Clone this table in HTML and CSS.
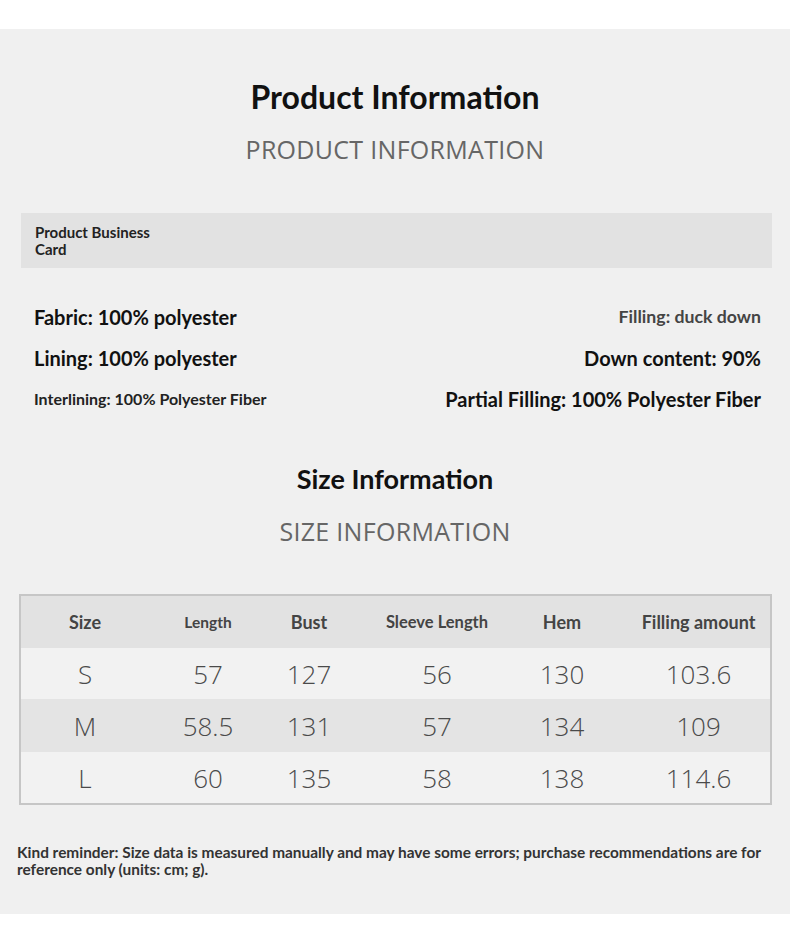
FILE: index.html
```html
<!DOCTYPE html>
<html>
<head>
<meta charset="utf-8">
<link rel="stylesheet" href="styles.css">
</head>
<body>
<div class="page">
  <section class="title-block first">
    <h1 class="title">Product Information</h1>
    <div class="subtitle">PRODUCT INFORMATION</div>
  </section>

  <div class="card-bar"><span class="card-label">Product Business<br>Card</span></div>

  <div class="specs">
    <div class="spec-col left">
      <div class="spec big">Fabric: 100% polyester</div>
      <div class="spec big">Lining: 100% polyester</div>
      <div class="spec small">Interlining: 100% Polyester Fiber</div>
    </div>
    <div class="spec-col right">
      <div class="spec mid">Filling: duck down</div>
      <div class="spec big">Down content: 90%</div>
      <div class="spec big">Partial Filling: 100% Polyester Fiber</div>
    </div>
  </div>

  <section class="title-block second">
    <h2 class="title">Size Information</h2>
    <div class="subtitle">SIZE INFORMATION</div>
  </section>

  <div class="table">
    <div class="row head">
      <div class="cell h-lg">Size</div>
      <div class="cell h-sm">Length</div>
      <div class="cell h-lg">Bust</div>
      <div class="cell h-md">Sleeve Length</div>
      <div class="cell h-lg">Hem</div>
      <div class="cell h-lg last">Filling amount</div>
    </div>
    <div class="row light">
      <div class="cell">S</div><div class="cell">57</div><div class="cell">127</div><div class="cell">56</div><div class="cell">130</div><div class="cell last">103.6</div>
    </div>
    <div class="row dark">
      <div class="cell">M</div><div class="cell">58.5</div><div class="cell">131</div><div class="cell">57</div><div class="cell">134</div><div class="cell last">109</div>
    </div>
    <div class="row light">
      <div class="cell">L</div><div class="cell">60</div><div class="cell">135</div><div class="cell">58</div><div class="cell">138</div><div class="cell last">114.6</div>
    </div>
  </div>

  <p class="note">Kind reminder: Size data is measured manually and may have some errors; purchase recommendations are for reference only (units: cm; g).</p>
</div>
</body>
</html>
```

FILE: styles.css
```css
html, body {
  margin: 0;
  padding: 0;
  background: #ffffff;
}
body {
  font-family: "Lato", "Open Sans", sans-serif;
}
.page {
  margin-top: 29px;
  background: #f0f0f0;
  height: 885px;
  box-sizing: border-box;
  padding-top: 1px;
}
.title-block {
  display: flex;
  flex-direction: column;
  align-items: center;
}
.title-block.first {
  margin-top: 47px;
}
.title-block.second {
  margin-top: 40px;
}
.title {
  margin: 0;
  font-family: "Lato", sans-serif;
  font-weight: 700;
  font-size: 32px;
  line-height: 40px;
  color: #111;
}
.second .title {
  font-size: 27px;
}
.subtitle {
  margin-top: 17px;
  font-family: "Open Sans", sans-serif;
  font-weight: 400;
  font-size: 25px;
  line-height: 30px;
  color: #666;
  letter-spacing: 0.3px;
}
.card-bar {
  margin: 49px 18px 0 21px;
  height: 55px;
  background: #e2e2e2;
  display: flex;
  align-items: center;
  padding-left: 14px;
}
.card-label {
  font-family: "Lato", sans-serif;
  font-weight: 700;
  font-size: 15px;
  line-height: 17px;
  color: #222;
}
.specs {
  display: flex;
  justify-content: space-between;
  margin: 28px 29px 0 34px;
}
.spec-col {
  display: flex;
  flex-direction: column;
}
.spec-col.right {
  align-items: flex-end;
}
.spec {
  height: 41px;
  display: flex;
  align-items: center;
  font-family: "Lato", sans-serif;
  font-weight: 700;
  color: #111;
}
.spec.big {
  font-size: 20px;
}
.spec.mid {
  font-size: 17.7px;
  color: #444;
}
.spec.small {
  font-size: 16px;
  color: #222;
}
.table {
  margin: 48px 18px 0 19px;
  border: 2px solid #c6c6c6;
}
.row {
  display: grid;
  grid-template-columns: 128px 118px 84px 172px 78px 169px;
}
.row.head {
  height: 52px;
  background: #e2e2e2;
}
.row.light {
  height: 51px;
  background: #f2f2f2;
}
.row.dark {
  height: 53px;
  background: #e4e4e4;
}
.cell {
  display: flex;
  align-items: center;
  justify-content: center;
  font-family: "Open Sans", sans-serif;
  font-weight: 350;
  font-size: 26px;
  color: #4a4a4a;
}
.cell.last {
  padding-left: 26px;
}
.head .cell {
  font-family: "Lato", sans-serif;
  font-weight: 700;
  color: #444;
}
.head .h-lg { font-size: 18px; }
.head .h-md { font-size: 16.5px; }
.head .h-sm { font-size: 15.5px; }
.note {
  margin: 39px 20px 0 17px;
  font-family: "Lato", sans-serif;
  font-weight: 700;
  font-size: 15.4px;
  line-height: 17px;
  color: #333;
}
```
